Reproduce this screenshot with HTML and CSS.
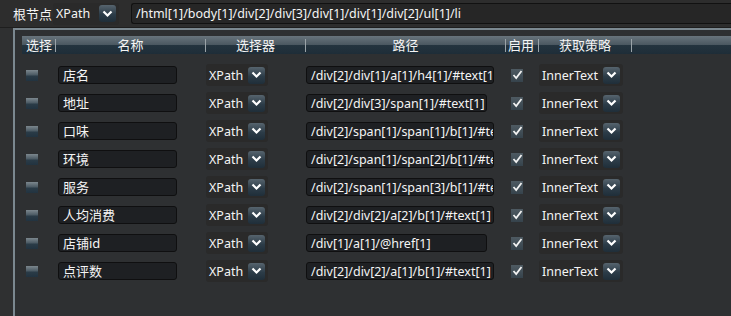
FILE: index.html
```html
<!DOCTYPE html>
<html lang="zh">
<head>
    <meta charset="UTF-8">
    <title>XPath 采集</title>
    <link rel="stylesheet" href="styles.css">
</head>
<body>
    <!-- 根节点 -->
    <div class="topbar">
        <span class="label">根节点</span>
        <div class="combo">
            <span>XPath</span>
            <span class="drop"><svg width="11" height="8" viewBox="0 0 11 8"><path d="M1.5 1.5 L5.5 5.5 L9.5 1.5" fill="none" stroke="#fff" stroke-width="2.2"/></svg></span>
        </div>
        <div class="root-path">/html[1]/body[1]/div[2]/div[3]/div[1]/div[1]/div[2]/ul[1]/li</div>
    </div>

    <div class="panel">
        <div class="grid head">
            <div class="c-sel">选择</div>
            <div class="c-name">名称</div>
            <div class="c-type">选择器</div>
            <div class="c-path">路径</div>
            <div class="c-on">启用</div>
            <div class="c-get">获取策略</div>
        </div>

        <div id="rows"></div>
    </div>

    <script>
        var filas = [
            ['店名', '/div[2]/div[1]/a[1]/h4[1]/#text[1]', 188],
            ['地址', '/div[2]/div[3]/span[1]/#text[1]', 181],
            ['口味', '/div[2]/span[1]/span[1]/b[1]/#text[1]', 188],
            ['环境', '/div[2]/span[1]/span[2]/b[1]/#text[1]', 188],
            ['服务', '/div[2]/span[1]/span[3]/b[1]/#text[1]', 188],
            ['人均消费', '/div[2]/div[2]/a[2]/b[1]/#text[1]', 188],
            ['店铺id', '/div[1]/a[1]/@href[1]', 181],
            ['点评数', '/div[2]/div[2]/a[1]/b[1]/#text[1]', 188]
        ];
        var chevron = '<span class="drop"><svg width="11" height="8" viewBox="0 0 11 8"><path d="M1.5 1.5 L5.5 5.5 L9.5 1.5" fill="none" stroke="#fff" stroke-width="2.2"/></svg></span>';
        var html = '';
        filas.forEach(function (f) {
            html += '<div class="grid row">' +
                '<div class="c-sel"><span class="pick"></span></div>' +
                '<div class="c-name"><div class="field name">' + f[0] + '</div></div>' +
                '<div class="c-type"><div class="combo small"><span>XPath</span>' + chevron + '</div></div>' +
                '<div class="c-path"><div class="field path" style="width:' + f[2] + 'px">' + f[1] + '</div></div>' +
                '<div class="c-on"><span class="check"><svg width="11" height="10" viewBox="0 0 11 10"><path d="M1.5 5 L4.2 8 L9.5 1" fill="none" stroke="#f2f2f2" stroke-width="1.8"/></svg></span></div>' +
                '<div class="c-get"><div class="combo small"><span>InnerText</span>' + chevron + '</div></div>' +
                '</div>';
        });
        document.getElementById('rows').innerHTML = html;
    </script>
</body>
</html>
```

FILE: styles.css
```css
body {
    margin: 0;
    background-color: #2f3031;
    color: #f4f4f4;
    font-family: "Noto Sans", "Noto Sans CJK SC", sans-serif;
    font-size: 12.5px;
    overflow: hidden;
}

.topbar {
    display: flex;
    align-items: center;
    height: 28px;
    padding-left: 13px;
    background-color: #2d2d2d;
    box-sizing: border-box;
    border-bottom: 1px solid #1e1e1e;
}

.label {
    font-size: 13px;
    margin-right: 1px;
}

.combo {
    display: flex;
    align-items: center;
    gap: 5px;
    height: 22px;
    padding-left: 3px;
    padding-right: 3px;
    background-color: #2a2a2a;
    border-radius: 3px;
}

.topbar .combo {
    width: 60px;
    justify-content: space-between;
}

.drop {
    display: flex;
    align-items: center;
    justify-content: center;
    width: 17px;
    height: 17px;
    border-radius: 3px;
    background: linear-gradient(#56646e, #2c3c48 55%, #1f2e39);
}

.root-path {
    flex: 1;
    height: 19px;
    line-height: 19px;
    margin-left: 12px;
    padding-left: 4px;
    background-color: #262626;
    border: 1px solid #111;
    border-right: none;
    border-radius: 3px 0 0 3px;
    white-space: nowrap;
    overflow: hidden;
}

.panel {
    margin-left: 13px;
    height: 288px;
    padding: 6px 0 0 7px;
    border-top: 2px solid #7b8890;
    border-left: 2px solid #7b8890;
    background-color: #2e3032;
    box-sizing: border-box;
}

.grid {
    display: grid;
    grid-template-columns: 34px 150px 100px 200px 33px 93px 1fr;
    align-items: center;
}

.head {
    height: 18px;
    font-size: 13px;
    background: linear-gradient(#68747c, #4a5760 50%, #24343f 50%, #1e2d38);
}

.head > div {
    text-align: center;
    border-right: 1px solid #9aa3a8;
    height: 13px;
    line-height: 13px;
}

.head .c-sel {
    text-align: left;
    padding-left: 4px;
}

.head .c-on {
    text-align: left;
    padding-left: 2px;
}

.row {
    height: 28px;
}

.row:first-child {
    margin-top: 7px;
}

.pick {
    display: block;
    width: 12px;
    height: 11px;
    margin-left: 4px;
    background: linear-gradient(#7c878e, #4b5a64 45%, #2a3b47 55%, #223340);
}

.field {
    height: 18px;
    line-height: 17px;
    padding-left: 4px;
    background-color: #1e2023;
    border: 1px solid #0f0f10;
    border-radius: 3px;
    white-space: nowrap;
    overflow: hidden;
    box-sizing: border-box;
}

.name {
    width: 119px;
    margin-left: 2px;
    font-size: 13px;
}

.combo.small {
    width: fit-content;
}

.check {
    display: flex;
    align-items: center;
    justify-content: center;
    width: 12px;
    height: 13px;
    margin-left: 5px;
    background: linear-gradient(#4e5a62, #36434c);
}
```
